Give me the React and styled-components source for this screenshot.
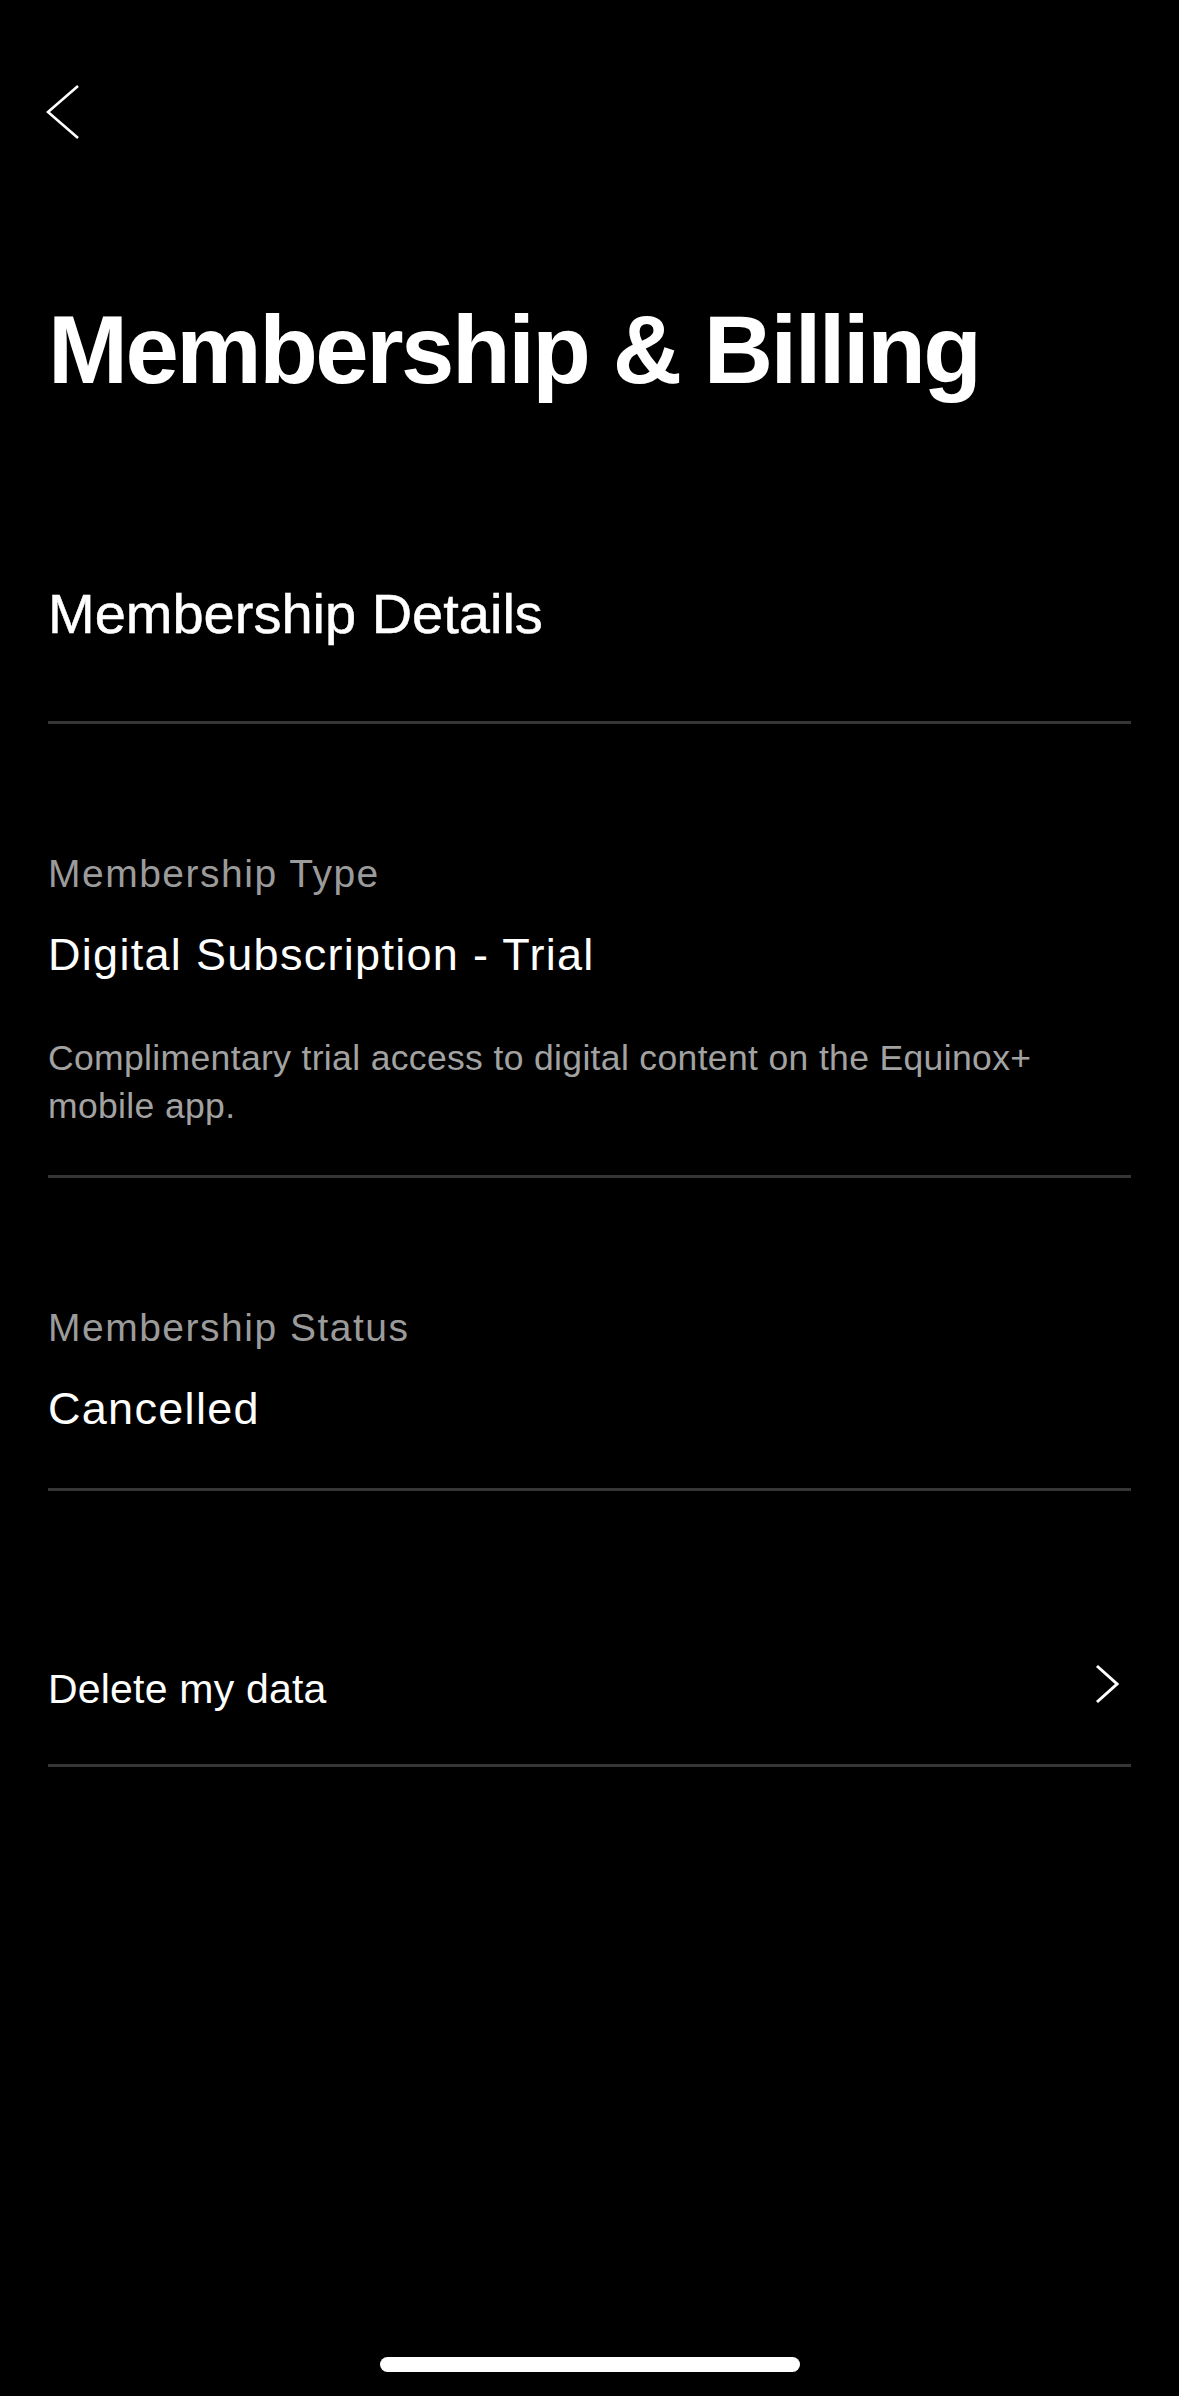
import React from "react";
import styled, { createGlobalStyle } from "styled-components";

const Global = createGlobalStyle`
  html, body { margin: 0; padding: 0; background: #000; }
  body { font-family: "Liberation Sans", Arial, Helvetica, sans-serif; color: #fff; }
  * { box-sizing: border-box; }
`;

const Page = styled.div`
  width: 1179px;
  min-height: 2396px;
  background: #000;
  display: flex;
  flex-direction: column;
  padding: 84px 48px 0 48px;
`;

const BackButton = styled.button`
  display: flex;
  align-items: center;
  justify-content: flex-start;
  width: 60px;
  height: 56px;
  padding: 0;
  margin: 0 0 0 -2px;
  border: none;
  background: transparent;
  cursor: pointer;
`;

const Title = styled.h1`
  margin: 157px 0 0 0;
  font-size: 96px;
  line-height: 106px;
  font-weight: 700;
  letter-spacing: -2.5px;
  color: #fff;
`;

const SectionHeading = styled.h2`
  margin: 179px 0 0 0;
  padding-bottom: 75px;
  border-bottom: 3px solid #353535;
  font-size: 56px;
  line-height: 64px;
  font-weight: 400;
  -webkit-text-stroke: 0.5px #fff;
  color: #fff;
`;

const InfoRow = styled.div`
  display: flex;
  flex-direction: column;
  padding: 128px 0 ${(p) => p.$bottom}px 0;
  border-bottom: 3px solid #353535;
`;

const Label = styled.div`
  font-size: 39px;
  line-height: 44px;
  letter-spacing: 1.5px;
  color: #9b9b9b;
`;

const Value = styled.div`
  margin-top: 33px;
  font-size: 45px;
  line-height: 52px;
  letter-spacing: 1.3px;
  color: #fff;
`;

const Description = styled.p`
  margin: 53px 0 0 0;
  font-size: 35.5px;
  line-height: 48px;
  letter-spacing: 0.35px;
  color: #a2a2a2;
`;

const LinkRow = styled.button`
  display: flex;
  align-items: center;
  justify-content: space-between;
  width: 100%;
  padding: 173px 0 50px 0;
  margin: 0;
  background: transparent;
  border: none;
  border-bottom: 3px solid #353535;
  cursor: pointer;
  text-align: left;
`;

const LinkText = styled.span`
  font-family: "Liberation Sans", Arial, sans-serif;
  font-size: 41px;
  line-height: 48px;
  letter-spacing: 0.2px;
  color: #fff;
`;

const Chevron = styled.svg`
  display: block;
  margin: 0 12px 10px 0;
`;

const Spacer = styled.div`
  flex: 1;
`;

const HomeIndicator = styled.div`
  align-self: center;
  width: 420px;
  height: 15px;
  border-radius: 8px;
  background: #fff;
  margin: 0 0 24px 0;
`;

export default function App() {
  return (
    <>
      <Global />
      <Page>
        <BackButton aria-label="Back">
          <svg width="36" height="56" viewBox="0 0 36 56">
            <polyline
              points="32,2 2,28 32,54"
              fill="none"
              stroke="#fff"
              strokeWidth="2.6"
              strokeLinejoin="miter"
            />
          </svg>
        </BackButton>
        <Title>Membership &amp; Billing</Title>
        <SectionHeading>Membership Details</SectionHeading>
        <InfoRow $bottom={45}>
          <Label>Membership Type</Label>
          <Value>Digital Subscription - Trial</Value>
          <Description>
            Complimentary trial access to digital content on the Equinox+ mobile app.
          </Description>
        </InfoRow>
        <InfoRow $bottom={53}>
          <Label>Membership Status</Label>
          <Value>Cancelled</Value>
        </InfoRow>
        <LinkRow>
          <LinkText>Delete my data</LinkText>
          <Chevron width="24" height="40" viewBox="0 0 24 40">
            <polyline
              points="2,2 22,20 2,38"
              fill="none"
              stroke="#fff"
              strokeWidth="3"
            />
          </Chevron>
        </LinkRow>
        <Spacer />
        <HomeIndicator />
      </Page>
    </>
  );
}
